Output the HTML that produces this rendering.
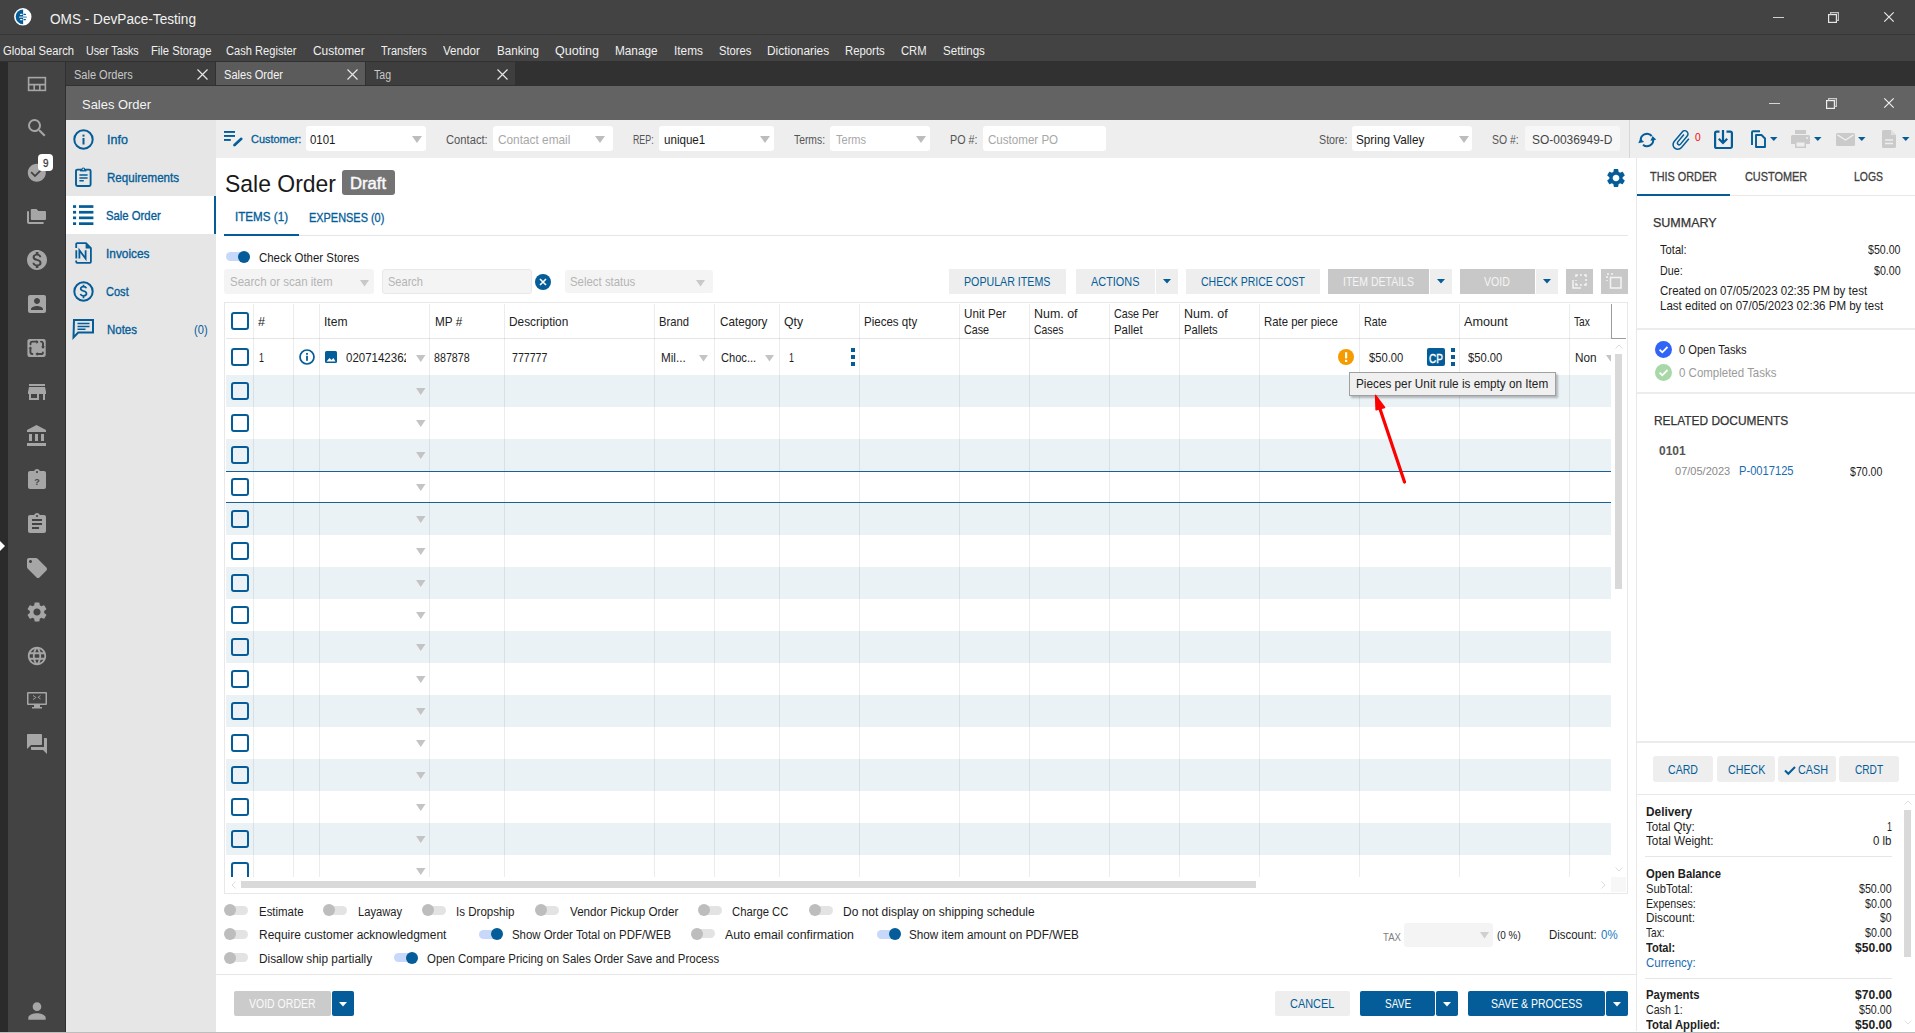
<!DOCTYPE html>
<html><head><meta charset="utf-8"><title>OMS - Sales Order</title><style>
*{margin:0;padding:0;box-sizing:border-box}
html,body{width:1915px;height:1033px;overflow:hidden;background:#fff;font-family:"Liberation Sans",sans-serif}
.a{position:absolute}
.t{position:absolute;white-space:nowrap;line-height:1;transform-origin:0 0}
svg{overflow:visible}
</style></head><body>
<div class="a" style="left:0px;top:0px;width:1915px;height:34px;background:#434343;"></div>
<div class="a" style="left:0px;top:34px;width:1915px;height:1px;background:#363636;"></div>
<div class="a" style="left:0px;top:35px;width:1915px;height:26px;background:#434343;"></div>
<svg class="a" style="left:10px;top:4px;" width="26" height="26" viewBox="0 0 26 26"><circle cx="12.8" cy="12.8" r="8.7" fill="#fff"/><path d="M13.1 5.4A7.4 7.4 0 0 0 13.1 20.2Z" fill="#045d98"/><rect x="10" y="9.8" width="2.6" height="1.3" rx="0.6" fill="#fff"/><rect x="13.4" y="9.8" width="2.6" height="1.3" rx="0.6" fill="#045d98"/><rect x="9" y="12.2" width="8" height="1.9" rx="0.9" fill="#8db4d0"/><rect x="10" y="14.9" width="2.6" height="1.3" rx="0.6" fill="#fff"/><rect x="13.4" y="14.9" width="2.6" height="1.3" rx="0.6" fill="#045d98"/></svg>
<div class="t" style="left:50.00px;top:11.98px;font-size:14.00px;color:#f2f2f2;transform:scaleX(0.9723);">OMS - DevPace-Testing</div>
<div class="a" style="left:1773px;top:16.5px;width:10.5px;height:1.5px;background:#cfcfcf;"></div>
<svg class="a" style="left:1828px;top:12px;" width="11" height="11" viewBox="0 0 11 11"><rect x="0.6" y="2.6" width="7.8" height="7.8" fill="none" stroke="#e6e6e6" stroke-width="1.2"/><path d="M2.6 2.6V0.6h7.8v7.8h-2" fill="none" stroke="#c0c0c0" stroke-width="1.2"/></svg>
<svg class="a" style="left:1883.5px;top:12px;" width="10" height="10" viewBox="0 0 10 10"><path d="M0.3 0.3L9.7 9.7M9.7 0.3L0.3 9.7" stroke="#e8e8e8" stroke-width="1.2"/></svg>
<div class="t" style="left:2.60px;top:45.02px;font-size:12.50px;color:#f0f0f0;transform:scaleX(0.8963);">Global Search</div>
<div class="t" style="left:86.20px;top:45.02px;font-size:12.50px;color:#f0f0f0;transform:scaleX(0.8556);">User Tasks</div>
<div class="t" style="left:151.40px;top:45.02px;font-size:12.50px;color:#f0f0f0;transform:scaleX(0.8991);">File Storage</div>
<div class="t" style="left:226.40px;top:45.02px;font-size:12.50px;color:#f0f0f0;transform:scaleX(0.8901);">Cash Register</div>
<div class="t" style="left:313.30px;top:45.02px;font-size:12.50px;color:#f0f0f0;transform:scaleX(0.9542);">Customer</div>
<div class="t" style="left:381.20px;top:45.02px;font-size:12.50px;color:#f0f0f0;transform:scaleX(0.8734);">Transfers</div>
<div class="t" style="left:443.00px;top:45.02px;font-size:12.50px;color:#f0f0f0;transform:scaleX(0.9313);">Vendor</div>
<div class="t" style="left:496.60px;top:45.02px;font-size:12.50px;color:#f0f0f0;transform:scaleX(0.9275);">Banking</div>
<div class="t" style="left:554.80px;top:45.02px;font-size:12.50px;color:#f0f0f0;transform:scaleX(1.0027);">Quoting</div>
<div class="t" style="left:615.40px;top:45.02px;font-size:12.50px;color:#f0f0f0;transform:scaleX(0.9430);">Manage</div>
<div class="t" style="left:674.00px;top:45.02px;font-size:12.50px;color:#f0f0f0;transform:scaleX(0.9457);">Items</div>
<div class="t" style="left:718.80px;top:45.02px;font-size:12.50px;color:#f0f0f0;transform:scaleX(0.8968);">Stores</div>
<div class="t" style="left:766.80px;top:45.02px;font-size:12.50px;color:#f0f0f0;transform:scaleX(0.9525);">Dictionaries</div>
<div class="t" style="left:845.20px;top:45.02px;font-size:12.50px;color:#f0f0f0;transform:scaleX(0.9070);">Reports</div>
<div class="t" style="left:901.30px;top:45.02px;font-size:12.50px;color:#f0f0f0;transform:scaleX(0.8993);">CRM</div>
<div class="t" style="left:943.00px;top:45.02px;font-size:12.50px;color:#f0f0f0;transform:scaleX(0.9277);">Settings</div>
<div class="a" style="left:0px;top:61px;width:1915px;height:25px;background:#313131;"></div>
<div class="a" style="left:0px;top:62px;width:8px;height:971px;background:#2b2b2b;"></div>
<div class="a" style="left:8px;top:62px;width:58px;height:971px;background:#434343;"></div>
<div class="a" style="left:65px;top:62px;width:1px;height:970px;background:#2f2f2f;"></div>
<div class="a" style="left:66px;top:62px;width:149px;height:23px;background:#3e3e3e;"></div>
<div class="t" style="left:74.00px;top:68.82px;font-size:12.50px;color:#c8c8c8;transform:scaleX(0.8816);">Sale Orders</div>
<svg class="a" style="left:197px;top:69px;" width="11" height="11" viewBox="0 0 11 11"><path d="M0.5 0.5L10.5 10.5M10.5 0.5L0.5 10.5" stroke="#e6e6e6" stroke-width="1.2"/></svg>
<div class="a" style="left:216px;top:62px;width:149px;height:23px;background:#5b5b5b;"></div>
<div class="t" style="left:224.00px;top:68.82px;font-size:12.50px;color:#f4f4f4;transform:scaleX(0.8846);">Sales Order</div>
<svg class="a" style="left:347px;top:69px;" width="11" height="11" viewBox="0 0 11 11"><path d="M0.5 0.5L10.5 10.5M10.5 0.5L0.5 10.5" stroke="#e6e6e6" stroke-width="1.2"/></svg>
<div class="a" style="left:366px;top:62px;width:149px;height:23px;background:#3e3e3e;"></div>
<div class="t" style="left:374.00px;top:68.82px;font-size:12.50px;color:#c8c8c8;transform:scaleX(0.8435);">Tag</div>
<svg class="a" style="left:497px;top:69px;" width="11" height="11" viewBox="0 0 11 11"><path d="M0.5 0.5L10.5 10.5M10.5 0.5L0.5 10.5" stroke="#e6e6e6" stroke-width="1.2"/></svg>
<div class="a" style="left:66px;top:86px;width:1849px;height:34px;background:#636363;"></div>
<div class="t" style="left:82.40px;top:98.26px;font-size:13.50px;color:#f4f4f4;transform:scaleX(0.9579);">Sales Order</div>
<div class="a" style="left:1769px;top:102.5px;width:10.5px;height:1.5px;background:#d6d6d6;"></div>
<svg class="a" style="left:1826px;top:98px;" width="11" height="11" viewBox="0 0 11 11"><rect x="0.6" y="2.6" width="7.8" height="7.8" fill="none" stroke="#eeeeee" stroke-width="1.2"/><path d="M2.6 2.6V0.6h7.8v7.8h-2" fill="none" stroke="#cccccc" stroke-width="1.2"/></svg>
<svg class="a" style="left:1883.5px;top:98px;" width="10" height="10" viewBox="0 0 10 10"><path d="M0.3 0.3L9.7 9.7M9.7 0.3L0.3 9.7" stroke="#f0f0f0" stroke-width="1.2"/></svg>
<svg class="a" style="left:24.5px;top:72.0px;" width="24" height="24" viewBox="0 0 24 24"><g fill="none" stroke="#a6a6a6" stroke-width="1.6"><rect x="3.6" y="5.6" width="16.8" height="12.8"/><path d="M3.6 12.6h16.8M9.2 12.6v5.8M14.8 12.6v5.8"/></g></svg>
<svg class="a" style="left:24.5px;top:116.0px;" width="24" height="24" viewBox="0 0 24 24"><path fill="#a6a6a6" d="M15.5 14h-.79l-.28-.27A6.471 6.471 0 0 0 16 9.5 6.5 6.5 0 1 0 9.5 16c1.610 0 3.09-.59 4.23-1.57l.27.28v.79l5 4.99L20.49 19l-4.99-5zm-6 0C7.01 14 5 11.99 5 9.5S7.01 5 9.5 5 14 7.01 14 9.5 11.99 14 9.5 14z"/></svg>
<svg class="a" style="left:25.7px;top:161.7px;" width="21.6" height="21.6" viewBox="0 0 24 24"><path fill="#a6a6a6" d="M12 2C6.48 2 2 6.48 2 12s4.48 10 10 10 10-4.48 10-10S17.52 2 12 2zm-2 15l-5-5 1.41-1.41L10 14.17l7.59-7.59L19 8l-9 9z"/></svg>
<div class="a" style="left:38px;top:154px;width:15px;height:17px;background:#fff;border-radius:4px"></div>
<div class="t" style="left:42.80px;top:158.13px;font-size:10.50px;color:#3a3a3a;transform:scaleX(0.9418);-webkit-text-stroke:0.3px #3a3a3a;">9</div>
<svg class="a" style="left:24px;top:204px;" width="26" height="26" viewBox="0 0 26 26"><path d="M4 7.2V17.9a1 1 0 0 0 1 1H19.6" fill="none" stroke="#a6a6a6" stroke-width="2"/><path d="M8 4.9h4.5l1.8 2h6.7a1 1 0 0 1 1 1V15a1 1 0 0 1-1 1H7.8a1 1 0 0 1-1-1V6a1.1 1.1 0 0 1 1.2-1.1z" fill="#a6a6a6"/></svg>
<svg class="a" style="left:24.5px;top:248.0px;" width="24" height="24" viewBox="0 0 24 24"><path fill="#a6a6a6" d="M12 2C6.48 2 2 6.48 2 12s4.48 10 10 10 10-4.48 10-10S17.52 2 12 2zm1.41 16.09V20h-2.67v-1.93c-1.71-.36-3.16-1.46-3.27-3.4h1.96c.1 1.05.82 1.87 2.65 1.870 1.96 0 2.4-.98 2.4-1.59 0-.83-.44-1.61-2.67-2.14-2.48-.6-4.18-1.62-4.18-3.67 0-1.72 1.39-2.84 3.11-3.21V4h2.67v1.95c1.86.45 2.79 1.86 2.85 3.39H14.3c-.05-1.11-.64-1.87-2.22-1.87-1.5 0-2.4.68-2.4 1.64 0 .84.65 1.39 2.67 1.91s4.18 1.39 4.18 3.91c-.01 1.83-1.38 2.83-3.12 3.16z"/></svg>
<svg class="a" style="left:24.5px;top:292.0px;" width="24" height="24" viewBox="0 0 24 24"><path fill="#a6a6a6" d="M3 5v14a2 2 0 0 0 2 2h14c1.1 0 2-.9 2-2V5c0-1.1-.9-2-2-2H5a2 2 0 0 0-2 2zm12 4c0 1.66-1.34 3-3 3s-3-1.34-3-3 1.34-3 3-3 3 1.34 3 3zm-9 8c0-2 4-3.1 6-3.1s6 1.1 6 3.1v1H6v-1z"/></svg>
<svg class="a" style="left:24px;top:335px;" width="26" height="26" viewBox="0 0 26 26"><rect x="3.4" y="3.9" width="18.3" height="18" rx="2.2" fill="#a6a6a6"/><g fill="none" stroke="#434343" stroke-width="1.9" stroke-linecap="round"><path d="M6.5 9.2V8.6a2 2 0 0 1 2-2h4.4"/><path d="M17 6.6a2 2 0 0 1 2 2v3.6"/><path d="M8.4 19a2 2 0 0 1-2-2v-3.4"/><path d="M18.9 17.4a1.6 1.6 0 0 1-1.6 1.6h-3.6"/></g><g fill="#434343"><path d="M12.4 4.9L14.6 6.9 12.4 8.9z"/><path d="M17 11.4L19 13.7 21 11.4z"/><path d="M6.4 11.4L4.4 13.6h4z"/><path d="M13.6 17L11.4 19 13.6 21z"/></g></svg>
<svg class="a" style="left:24.5px;top:380.0px;" width="24" height="24" viewBox="0 0 24 24"><path fill="#a6a6a6" d="M20 4H4v2h16V4zm1 10v-2l-1-5H4l-1 5v2h1v6h10v-6h4v6h2v-6h1zm-9 4H6v-4h6v4z"/></svg>
<svg class="a" style="left:24.5px;top:424.0px;" width="24" height="24" viewBox="0 0 24 24"><path fill="#a6a6a6" d="M4 10v7h3v-7H4zm6 0v7h3v-7h-3zM2 22h19v-3H2v3zm14-12v7h3v-7h-3zm-4.5-9L2 6v2h19V6l-9.5-5z"/></svg>
<svg class="a" style="left:24.5px;top:468.0px;" width="24" height="24" viewBox="0 0 24 24"><path fill="#a6a6a6" d="M19 3h-4.18C14.4 1.84 13.3 1 12 1c-1.3 0-2.4.84-2.82 2H5c-1.1 0-2 .9-2 2v14c0 1.1.9 2 2 2h14c1.1 0 2-.9 2-2V5c0-1.1-.9-2-2-2zm-7 0c.55 0 1 .45 1 1s-.45 1-1 1-1-.45-1-1 .45-1 1-1z"/><text x="12" y="17" font-size="9" font-family="Liberation Sans" text-anchor="middle" fill="#434343" font-weight="bold">?</text></svg>
<svg class="a" style="left:24.5px;top:512.0px;" width="24" height="24" viewBox="0 0 24 24"><path fill="#a6a6a6" d="M19 3h-4.18C14.4 1.84 13.3 1 12 1c-1.3 0-2.4.84-2.82 2H5c-1.1 0-2 .9-2 2v14c0 1.1.9 2 2 2h14c1.1 0 2-.9 2-2V5c0-1.1-.9-2-2-2zm-7 0c.55 0 1 .45 1 1s-.45 1-1 1-1-.45-1-1 .45-1 1-1zm2 14H7v-2h7v2zm3-4H7v-2h10v2zm0-4H7V7h10v2z"/></svg>
<svg class="a" style="left:24.5px;top:556.0px;" width="24" height="24" viewBox="0 0 24 24"><path fill="#a6a6a6" d="M21.41 11.58l-9-9C12.05 2.22 11.55 2 11 2H4c-1.1 0-2 .9-2 2v7c0 .55.22 1.05.59 1.42l9 9c.36.36.86.58 1.41.58.55 0 1.05-.22 1.41-.59l7-7c.37-.36.59-.86.59-1.41 0-.55-.23-1.060-.59-1.42zM5.5 7C4.67 7 4 6.33 4 5.5S4.67 4 5.5 4 7 4.67 7 5.5 6.33 7 5.5 7z"/></svg>
<svg class="a" style="left:24.5px;top:600.0px;" width="24" height="24" viewBox="0 0 24 24"><path fill="#a6a6a6" d="M19.14 12.94c.04-.3.06-.61.06-.94 0-.32-.02-.64-.07-.94l2.03-1.58a.49.49 0 0 0 .12-.61l-1.92-3.32a.488.488 0 0 0-.59-.22l-2.39.96c-.5-.38-1.03-.7-1.62-.94l-.36-2.54a.484.484 0 0 0-.48-.41h-3.84c-.24 0-.43.17-.47.41l-.36 2.54c-.59.24-1.13.57-1.62.94l-2.39-.96c-.22-.08-.47 0-.59.22L2.74 8.87c-.12.21-.08.47.12.61l2.03 1.58c-.05.3-.09.63-.09.94s.02.64.07.94l-2.03 1.58a.49.49 0 0 0-.12.61l1.92 3.32c.12.22.37.29.59.22l2.39-.96c.5.38 1.03.7 1.62.94l.36 2.54c.05.24.24.41.48.41h3.84c.24 0 .44-.17.47-.41l.36-2.54c.59-.24 1.13-.56 1.62-.94l2.39.96c.22.08.47 0 .59-.22l1.92-3.32c.12-.22.07-.47-.12-.61l-2.01-1.58zM12 15.6c-1.98 0-3.6-1.62-3.6-3.6s1.62-3.6 3.6-3.6 3.6 1.62 3.6 3.6-1.62 3.6-3.6 3.6z"/></svg>
<svg class="a" style="left:25.5px;top:645.0px;" width="22" height="22" viewBox="0 0 24 24"><path fill="#a6a6a6" d="M11.99 2C6.47 2 2 6.48 2 12s4.47 10 9.99 10C17.52 22 22 17.52 22 12S17.52 2 11.99 2zm6.93 6h-2.95a15.65 15.65 0 0 0-1.38-3.56A8.03 8.03 0 0 1 18.92 8zM12 4.04c.83 1.2 1.48 2.53 1.91 3.96h-3.82c.43-1.43 1.08-2.76 1.910-3.96zM4.26 14C4.1 13.36 4 12.69 4 12s.1-1.36.26-2h3.38c-.08.66-.14 1.32-.14 2 0 .68.06 1.34.14 2H4.26zm.82 2h2.95c.32 1.25.78 2.45 1.38 3.56A7.987 7.987 0 0 1 5.08 16zm2.95-8H5.08a7.987 7.987 0 0 1 4.33-3.56A15.65 15.65 0 0 0 8.03 8zM12 19.96c-.83-1.2-1.48-2.53-1.91-3.96h3.82c-.43 1.43-1.08 2.76-1.91 3.96zM14.34 14H9.66c-.09-.66-.16-1.32-.16-2 0-.68.07-1.35.16-2h4.68c.09.65.16 1.32.16 2 0 .68-.07 1.34-.16 2zm.25 5.56c.6-1.11 1.06-2.31 1.38-3.56h2.95a8.03 8.03 0 0 1-4.33 3.56zM16.36 14c.08-.66.14-1.32.14-2 0-.68-.06-1.34-.14-2h3.38c.16.64.26 1.31.26 2s-.1 1.36-.26 2h-3.38z"/></svg>
<svg class="a" style="left:24.5px;top:688.0px;" width="24" height="24" viewBox="0 0 24 24"><g fill="#a6a6a6"><path d="M3 4h18a1 1 0 0 1 1 1v11a1 1 0 0 1-1 1h-6v2h2v1.5H7V19h2v-2H3a1 1 0 0 1-1-1V5a1 1 0 0 1 1-1zm.5 1.6v9.8h17V5.6z"/><path d="M8 11l2.5-1.5L8 8v-.9l3.5 2.4L8 11.9zM15.5 7l-3 2.2 3 2.2v-.9l-1.9-1.3 1.9-1.3z"/></g></svg>
<svg class="a" style="left:24.5px;top:732.0px;" width="24" height="24" viewBox="0 0 24 24"><path fill="#a6a6a6" d="M21 6h-2v9H6v2c0 .55.45 1 1 1h11l4 4V7c0-.55-.45-1-1-1zm-4 6V3c0-.55-.45-1-1-1H3c-.55 0-1 .45-1 1v14l4-4h10c.55 0 1-.45 1-1z"/></svg>
<svg class="a" style="left:23.5px;top:997.5px;" width="26" height="26" viewBox="0 0 24 24"><path fill="#a6a6a6" d="M12 12c2.21 0 4-1.79 4-4s-1.79-4-4-4-4 1.79-4 4 1.79 4 4 4zm0 2c-2.67 0-8 1.34-8 4v2h16v-2c0-2.66-5.33-4-8-4z"/></svg>
<svg class="a" style="left:0px;top:541px;" width="6" height="10" viewBox="0 0 6 10"><path d="M0 0L5 5L0 10Z" fill="#fff"/></svg>
<div class="a" style="left:66px;top:120px;width:150px;height:913px;background:#e6e6e6;"></div>
<div class="a" style="left:66px;top:196px;width:150px;height:38px;background:#ffffff;"></div>
<div class="a" style="left:214px;top:196px;width:2px;height:38px;background:#045d98;"></div>
<div class="t" style="left:106.70px;top:134.07px;font-size:12.80px;color:#045d98;transform:scaleX(0.9789);-webkit-text-stroke:0.35px #045d98;">Info</div>
<div class="t" style="left:106.70px;top:171.87px;font-size:12.80px;color:#045d98;transform:scaleX(0.9036);-webkit-text-stroke:0.35px #045d98;">Requirements</div>
<div class="t" style="left:106.00px;top:210.17px;font-size:12.80px;color:#045d98;transform:scaleX(0.8837);-webkit-text-stroke:0.35px #045d98;">Sale Order</div>
<div class="t" style="left:106.40px;top:248.07px;font-size:12.80px;color:#045d98;transform:scaleX(0.9264);-webkit-text-stroke:0.35px #045d98;">Invoices</div>
<div class="t" style="left:106.00px;top:286.37px;font-size:12.80px;color:#045d98;transform:scaleX(0.8625);-webkit-text-stroke:0.35px #045d98;">Cost</div>
<div class="t" style="left:106.70px;top:324.17px;font-size:12.80px;color:#045d98;transform:scaleX(0.8942);-webkit-text-stroke:0.35px #045d98;">Notes</div>
<div class="t" style="left:193.60px;top:324.17px;font-size:12.80px;color:#045d98;transform:scaleX(0.8693);">(0)</div>
<svg class="a" style="left:73px;top:129px;" width="21" height="21" viewBox="0 0 21 21"><circle cx="10.5" cy="10.5" r="9.2" fill="none" stroke="#045d98" stroke-width="2"/><rect x="9.5" y="9" width="2" height="6.5" fill="#045d98"/><rect x="9.5" y="5.6" width="2" height="2" fill="#045d98"/></svg>
<svg class="a" style="left:75px;top:167px;" width="17" height="20" viewBox="0 0 17 20"><path d="M5.4 2.6H2.4a1.4 1.4 0 0 0-1.4 1.4v13.6a1.4 1.4 0 0 0 1.4 1.4h11.8a1.4 1.4 0 0 0 1.4-1.4V4a1.4 1.4 0 0 0-1.4-1.4H11.2" fill="none" stroke="#045d98" stroke-width="1.9"/><path d="M5 1.8h6.6v2.6H5z" fill="#045d98"/><circle cx="8.3" cy="2.4" r="1.9" fill="#045d98"/><circle cx="8.3" cy="2.4" r="0.8" fill="#e6e6e6"/><path d="M4.4 8h8.2M4.4 10.9h8.2M4.4 13.8h4.4" stroke="#045d98" stroke-width="1.5"/></svg>
<svg class="a" style="left:73px;top:205px;" width="21" height="21" viewBox="0 0 21 21"><g fill="#045d98"><rect x="0" y="0.2" width="3.1" height="2.7"/><rect x="0" y="5.9" width="3.1" height="2.7"/><rect x="0" y="11.5" width="3.1" height="2.7"/><rect x="0" y="17.3" width="3.1" height="2.7"/><rect x="6" y="0.2" width="14.4" height="2.7"/><rect x="6" y="5.9" width="14.4" height="2.7"/><rect x="6" y="11.5" width="14.4" height="2.7"/><rect x="6" y="17.3" width="14.4" height="2.7"/></g></svg>
<svg class="a" style="left:75px;top:242px;" width="17" height="22" viewBox="0 0 17 22"><path d="M1.2 6V2.2a1 1 0 0 1 1-1H11l4.9 4.9V19.8a1 1 0 0 1-1 1H2.2a1 1 0 0 1-1-1v-1.2" fill="none" stroke="#045d98" stroke-width="1.8"/><path d="M10.6 1.2V6.5H15.9Z" fill="#045d98"/><path d="M1.3 8.3v8.3M4.4 16.6V8.3l6.2 8.3V8.3" fill="none" stroke="#045d98" stroke-width="1.8"/></svg>
<svg class="a" style="left:73px;top:281px;" width="21" height="21" viewBox="0 0 21 21"><circle cx="10.5" cy="10.5" r="9.2" fill="none" stroke="#045d98" stroke-width="2"/><path d="M13.4 7.3c-.4-1.1-1.5-1.7-2.9-1.7-1.7 0-2.8.9-2.8 2.1 0 1.3 1 1.8 2.8 2.3 1.9.5 3 1.1 3 2.6 0 1.3-1.2 2.3-3 2.3-1.5 0-2.7-.7-3.1-1.9M10.5 3.8v2M10.5 15.2v2" fill="none" stroke="#045d98" stroke-width="1.7"/></svg>
<svg class="a" style="left:73px;top:319px;" width="21" height="20" viewBox="0 0 21 20"><path d="M1 1h19v12.5H5.2L0.5 18.5z" fill="none" stroke="#045d98" stroke-width="2" stroke-linejoin="miter"/><path d="M4.5 4.6h12M4.5 7.4h12M4.5 10.2h8" stroke="#045d98" stroke-width="1.5"/></svg>
<div class="a" style="left:216px;top:120px;width:1699px;height:38px;background:#eeeeee;"></div>
<div class="a" style="left:1629px;top:120px;width:1px;height:38px;background:#d6d6d6;"></div>
<svg class="a" style="left:223px;top:130px;" width="20" height="17" viewBox="0 0 20 17"><g fill="#045d98"><rect x="1" y="1" width="11" height="1.9"/><rect x="1" y="5" width="11" height="1.9"/><rect x="1" y="9" width="6.8" height="1.9"/></g><path d="M18.3 8.8L11.6 15" stroke="#045d98" stroke-width="2.6" stroke-linecap="round"/><path d="M10.4 16.2l0.6-2.4 1.8 1.8z" fill="#045d98"/></svg>
<div class="t" style="left:250.70px;top:134.41px;font-size:11.30px;color:#045d98;transform:scaleX(0.9670);-webkit-text-stroke:0.3px #045d98;">Customer:</div>
<div class="a" style="left:306px;top:126px;width:120px;height:25px;background:#fff;border-radius:3px"></div>
<div class="t" style="left:310.00px;top:133.56px;font-size:12.20px;color:#1a1a1a;transform:scaleX(0.9395);">0101</div>
<svg class="a" style="left:412px;top:136px;" width="10" height="7" viewBox="0 0 10 7"><path d="M0 0H10L5.0 7Z" fill="#bdbdbd"/></svg>
<div class="t" style="left:446.30px;top:133.80px;font-size:12.00px;color:#555555;transform:scaleX(0.9331);">Contact:</div>
<div class="a" style="left:493px;top:126px;width:120px;height:25px;background:#fff;border-radius:3px"></div>
<div class="t" style="left:498.00px;top:133.56px;font-size:12.20px;color:#a8a8a8;transform:scaleX(0.9706);">Contact email</div>
<svg class="a" style="left:595px;top:136px;" width="10" height="7" viewBox="0 0 10 7"><path d="M0 0H10L5.0 7Z" fill="#bdbdbd"/></svg>
<div class="t" style="left:633.40px;top:133.80px;font-size:12.00px;color:#555555;transform:scaleX(0.7355);">REP:</div>
<div class="a" style="left:659px;top:126px;width:115px;height:25px;background:#fff;border-radius:3px"></div>
<div class="t" style="left:663.50px;top:133.56px;font-size:12.20px;color:#1a1a1a;transform:scaleX(0.9511);">unique1</div>
<svg class="a" style="left:760px;top:136px;" width="10" height="7" viewBox="0 0 10 7"><path d="M0 0H10L5.0 7Z" fill="#bdbdbd"/></svg>
<div class="t" style="left:794.00px;top:133.80px;font-size:12.00px;color:#555555;transform:scaleX(0.8611);">Terms:</div>
<div class="a" style="left:830px;top:126px;width:100px;height:25px;background:#fff;border-radius:3px"></div>
<div class="t" style="left:835.50px;top:133.56px;font-size:12.20px;color:#a8a8a8;transform:scaleX(0.9033);">Terms</div>
<svg class="a" style="left:916px;top:136px;" width="10" height="7" viewBox="0 0 10 7"><path d="M0 0H10L5.0 7Z" fill="#bdbdbd"/></svg>
<div class="t" style="left:950.00px;top:133.80px;font-size:12.00px;color:#555555;transform:scaleX(0.8931);">PO #:</div>
<div class="a" style="left:983px;top:126px;width:123px;height:25px;background:#fff;border-radius:3px"></div>
<div class="t" style="left:987.70px;top:133.56px;font-size:12.20px;color:#a8a8a8;transform:scaleX(0.9499);">Customer PO</div>
<div class="t" style="left:1318.50px;top:133.80px;font-size:12.00px;color:#555555;transform:scaleX(0.8902);">Store:</div>
<div class="a" style="left:1352px;top:126px;width:120px;height:25px;background:#fff;border-radius:3px"></div>
<div class="t" style="left:1356.00px;top:133.56px;font-size:12.20px;color:#1a1a1a;transform:scaleX(0.9636);">Spring Valley</div>
<svg class="a" style="left:1458.6px;top:136px;" width="10" height="7" viewBox="0 0 10 7"><path d="M0 0H10L5.0 7Z" fill="#bdbdbd"/></svg>
<div class="t" style="left:1492.40px;top:133.80px;font-size:12.00px;color:#555555;transform:scaleX(0.8670);">SO #:</div>
<div class="a" style="left:1525px;top:126px;width:95px;height:25px;background:#f7f7f7;border-radius:3px"></div>
<div class="t" style="left:1532.30px;top:133.56px;font-size:12.20px;color:#444;transform:scaleX(0.9810);">SO-0036949-D</div>
<div class="t" style="left:224.90px;top:171.71px;font-size:24.50px;color:#1a1a1a;transform:scaleX(0.9369);">Sale Order</div>
<div class="a" style="left:342px;top:170px;width:53px;height:25px;background:#737373;border-radius:3px"></div>
<div class="t" style="left:350.40px;top:174.63px;font-size:16.20px;color:#fafafa;transform:scaleX(1.0283);-webkit-text-stroke:0.45px #fafafa;">Draft</div>
<div class="t" style="left:234.80px;top:211.26px;font-size:12.20px;color:#045d98;transform:scaleX(0.9554);-webkit-text-stroke:0.3px #045d98;">ITEMS (1)</div>
<div class="t" style="left:309.00px;top:212.36px;font-size:12.20px;color:#045d98;transform:scaleX(0.8968);-webkit-text-stroke:0.3px #045d98;">EXPENSES (0)</div>
<div class="a" style="left:224px;top:235px;width:1404px;height:1px;background:#e6e6e6;"></div>
<div class="a" style="left:224px;top:234px;width:75px;height:2px;background:#045d98;"></div>
<svg class="a" style="left:1604px;top:166.3px;" width="24" height="24" viewBox="0 0 24 24"><path fill="#045d98" d="M19.14 12.94c.04-.3.06-.61.06-.94 0-.32-.02-.64-.07-.94l2.03-1.58a.49.49 0 0 0 .12-.61l-1.92-3.32a.488.488 0 0 0-.59-.22l-2.39.96c-.5-.38-1.03-.7-1.62-.94l-.36-2.540a.484.484 0 0 0-.48-.41h-3.84c-.24 0-.43.17-.47.41l-.36 2.54c-.59.24-1.13.57-1.62.94l-2.39-.96c-.22-.08-.47 0-.59.22L2.74 8.87c-.12.21-.08.47.12.61l2.03 1.58c-.05.3-.09.63-.09.94s.02.64.07.94l-2.03 1.58a.49.49 0 0 0-.12.61l1.92 3.32c.12.22.37.29.59.22l2.39-.96c.5.38 1.03.7 1.62.94l.36 2.54c.05.24.24.41.48.41h3.84c.24 0 .44-.17.47-.41l.36-2.54c.59-.24 1.13-.56 1.62-.94l2.39.96c.22.08.47 0 .59-.22l1.92-3.32c.12-.22.07-.47-.12-.61l-2.01-1.580zM12 15.6c-1.98 0-3.6-1.62-3.6-3.6s1.62-3.6 3.6-3.6 3.6 1.62 3.6 3.6-1.62 3.6-3.6 3.6z" transform="translate(12 12) scale(0.93) translate(-12 -12)"/></svg>
<div class="a" style="left:226px;top:252px;width:22px;height:9px;background:#c8d8fa;border-radius:5px"></div>
<div class="a" style="left:238px;top:250.5px;width:12px;height:12px;background:#045d98;border-radius:50%"></div>
<div class="t" style="left:258.50px;top:251.56px;font-size:12.20px;color:#1a1a1a;transform:scaleX(0.9372);">Check Other Stores</div>
<div class="a" style="left:224px;top:269px;width:150px;height:25px;background:#f4f4f4;border-radius:3px"></div>
<div class="t" style="left:230.30px;top:276.46px;font-size:12.20px;color:#b4b4b4;transform:scaleX(0.9466);">Search or scan item</div>
<svg class="a" style="left:360px;top:280px;" width="9" height="6.5" viewBox="0 0 9 6.5"><path d="M0 0H9L4.5 6.5Z" fill="#c8c8c8"/></svg>
<div class="a" style="left:382px;top:269px;width:150px;height:25px;background:#f4f4f4;border:1px solid #e8e8e8;border-radius:3px"></div>
<div class="t" style="left:388.20px;top:276.46px;font-size:12.20px;color:#b4b4b4;transform:scaleX(0.9054);">Search</div>
<svg class="a" style="left:535px;top:273.6px;" width="16" height="16" viewBox="0 0 16 16"><circle cx="8" cy="8" r="8" fill="#045d98"/><path d="M5 5L11 11M11 5L5 11" stroke="#fff" stroke-width="1.6"/></svg>
<div class="a" style="left:565px;top:270px;width:148px;height:23px;background:#f4f4f4;border-radius:3px"></div>
<div class="t" style="left:570.20px;top:276.46px;font-size:12.20px;color:#b4b4b4;transform:scaleX(0.9363);">Select status</div>
<svg class="a" style="left:696px;top:280px;" width="9" height="6.5" viewBox="0 0 9 6.5"><path d="M0 0H9L4.5 6.5Z" fill="#c8c8c8"/></svg>
<div class="a" style="left:949px;top:269px;width:117px;height:25px;background:#eeeeee;"></div>
<div class="t" style="left:964.40px;top:275.96px;font-size:12.20px;color:#045d98;transform:scaleX(0.8739);">POPULAR ITEMS</div>
<div class="a" style="left:1076px;top:269px;width:79px;height:25px;background:#eeeeee;"></div>
<div class="t" style="left:1091.30px;top:275.96px;font-size:12.20px;color:#045d98;transform:scaleX(0.8944);">ACTIONS</div>
<div class="a" style="left:1156px;top:269px;width:22px;height:25px;background:#eeeeee;"></div>
<svg class="a" style="left:1163.0px;top:279.35px;" width="8" height="4.5" viewBox="0 0 8 4.5"><path d="M0 0H8L4.0 4.5Z" fill="#045d98"/></svg>
<div class="a" style="left:1186px;top:269px;width:134px;height:25px;background:#eeeeee;"></div>
<div class="t" style="left:1201.30px;top:275.96px;font-size:12.20px;color:#045d98;transform:scaleX(0.8627);">CHECK PRICE COST</div>
<div class="a" style="left:1328px;top:269px;width:101px;height:25px;background:#c8c8c8;"></div>
<div class="t" style="left:1343.00px;top:275.96px;font-size:12.20px;color:#f4f4f4;transform:scaleX(0.8608);">ITEM DETAILS</div>
<div class="a" style="left:1430px;top:269px;width:22px;height:25px;background:#eeeeee;"></div>
<svg class="a" style="left:1437.0px;top:279.35px;" width="8" height="4.5" viewBox="0 0 8 4.5"><path d="M0 0H8L4.0 4.5Z" fill="#045d98"/></svg>
<div class="a" style="left:1460px;top:269px;width:75px;height:25px;background:#c8c8c8;"></div>
<div class="t" style="left:1484.40px;top:275.96px;font-size:12.20px;color:#f4f4f4;transform:scaleX(0.8683);">VOID</div>
<div class="a" style="left:1536px;top:269px;width:22px;height:25px;background:#eeeeee;"></div>
<svg class="a" style="left:1543.0px;top:279.35px;" width="8" height="4.5" viewBox="0 0 8 4.5"><path d="M0 0H8L4.0 4.5Z" fill="#045d98"/></svg>
<div class="a" style="left:1566px;top:269px;width:27px;height:25px;background:#c8c8c8;"></div>
<svg class="a" style="left:1569px;top:271px;" width="20" height="20" viewBox="0 0 20 20"><g fill="none" stroke="#f2f2f2" stroke-width="1.6"><path d="M4 9v8h8"/><path d="M7 6V4h2M11 4h2M15 4h2v2M17 8v2M17 12v2h-2M13 14h-2M9 14h-2v-2M7 10v-1" stroke-dasharray="none"/></g></svg>
<div class="a" style="left:1601px;top:269px;width:27px;height:25px;background:#c8c8c8;"></div>
<svg class="a" style="left:1604px;top:271px;" width="20" height="20" viewBox="0 0 20 20"><g fill="none" stroke="#f2f2f2" stroke-width="1.6"><rect x="6.5" y="6.5" width="10.5" height="10.5"/><path d="M3 3h2M7 3h2M3 5v2M3 9v1"/></g></svg>
<div class="a" style="left:224px;top:302px;width:1404px;height:592px;border:1px solid #e8e8e8"></div>
<div class="a" style="left:226px;top:375px;width:1385px;height:32px;background:#ebf2f6;"></div>
<div class="a" style="left:226px;top:439px;width:1385px;height:32px;background:#ebf2f6;"></div>
<div class="a" style="left:226px;top:503px;width:1385px;height:32px;background:#ebf2f6;"></div>
<div class="a" style="left:226px;top:567px;width:1385px;height:32px;background:#ebf2f6;"></div>
<div class="a" style="left:226px;top:631px;width:1385px;height:32px;background:#ebf2f6;"></div>
<div class="a" style="left:226px;top:695px;width:1385px;height:32px;background:#ebf2f6;"></div>
<div class="a" style="left:226px;top:759px;width:1385px;height:32px;background:#ebf2f6;"></div>
<div class="a" style="left:226px;top:823px;width:1385px;height:32px;background:#ebf2f6;"></div>
<div class="a" style="left:226px;top:338px;width:1385px;height:1px;background:#e6e6e6;"></div>
<div class="a" style="left:253px;top:304px;width:1px;height:573px;background:rgba(0,0,0,0.075);"></div>
<div class="a" style="left:293px;top:304px;width:1px;height:573px;background:rgba(0,0,0,0.075);"></div>
<div class="a" style="left:319px;top:304px;width:1px;height:573px;background:rgba(0,0,0,0.075);"></div>
<div class="a" style="left:429px;top:304px;width:1px;height:573px;background:rgba(0,0,0,0.075);"></div>
<div class="a" style="left:504px;top:304px;width:1px;height:573px;background:rgba(0,0,0,0.075);"></div>
<div class="a" style="left:654px;top:304px;width:1px;height:573px;background:rgba(0,0,0,0.075);"></div>
<div class="a" style="left:714px;top:304px;width:1px;height:573px;background:rgba(0,0,0,0.075);"></div>
<div class="a" style="left:779px;top:304px;width:1px;height:573px;background:rgba(0,0,0,0.075);"></div>
<div class="a" style="left:859px;top:304px;width:1px;height:573px;background:rgba(0,0,0,0.075);"></div>
<div class="a" style="left:959px;top:304px;width:1px;height:573px;background:rgba(0,0,0,0.075);"></div>
<div class="a" style="left:1029px;top:304px;width:1px;height:573px;background:rgba(0,0,0,0.075);"></div>
<div class="a" style="left:1109px;top:304px;width:1px;height:573px;background:rgba(0,0,0,0.075);"></div>
<div class="a" style="left:1179px;top:304px;width:1px;height:573px;background:rgba(0,0,0,0.075);"></div>
<div class="a" style="left:1259px;top:304px;width:1px;height:573px;background:rgba(0,0,0,0.075);"></div>
<div class="a" style="left:1359px;top:304px;width:1px;height:573px;background:rgba(0,0,0,0.075);"></div>
<div class="a" style="left:1459px;top:304px;width:1px;height:573px;background:rgba(0,0,0,0.075);"></div>
<div class="a" style="left:1569px;top:304px;width:1px;height:573px;background:rgba(0,0,0,0.075);"></div>
<div class="a" style="left:226px;top:471px;width:1385px;height:1.4px;background:#1a5f95;"></div>
<div class="a" style="left:226px;top:502px;width:1385px;height:1.4px;background:#1a5f95;"></div>
<div class="a" style="left:1611px;top:304px;width:1px;height:35px;background:#9c9c9c;"></div>
<div class="a" style="left:1611px;top:338px;width:15px;height:1px;background:#9c9c9c;"></div>
<div class="t" style="left:258.00px;top:316.23px;font-size:12.40px;color:#222;transform:scaleX(1.0150);">#</div>
<div class="t" style="left:323.90px;top:316.23px;font-size:12.40px;color:#222;transform:scaleX(0.9745);">Item</div>
<div class="t" style="left:434.70px;top:316.23px;font-size:12.40px;color:#222;transform:scaleX(0.9471);">MP #</div>
<div class="t" style="left:509.30px;top:316.23px;font-size:12.40px;color:#222;transform:scaleX(0.9560);">Description</div>
<div class="t" style="left:659.40px;top:316.23px;font-size:12.40px;color:#222;transform:scaleX(0.9066);">Brand</div>
<div class="t" style="left:719.60px;top:316.23px;font-size:12.40px;color:#222;transform:scaleX(0.9440);">Category</div>
<div class="t" style="left:784.00px;top:316.23px;font-size:12.40px;color:#222;transform:scaleX(0.9902);">Qty</div>
<div class="t" style="left:864.00px;top:316.23px;font-size:12.40px;color:#222;transform:scaleX(0.9300);">Pieces qty</div>
<div class="t" style="left:1264.10px;top:316.23px;font-size:12.40px;color:#222;transform:scaleX(0.9163);">Rate per piece</div>
<div class="t" style="left:1364.20px;top:316.23px;font-size:12.40px;color:#222;transform:scaleX(0.8705);">Rate</div>
<div class="t" style="left:1464.20px;top:316.23px;font-size:12.40px;color:#222;transform:scaleX(1.0226);">Amount</div>
<div class="t" style="left:1574.10px;top:316.23px;font-size:12.40px;color:#222;transform:scaleX(0.8240);">Tax</div>
<div class="t" style="left:964.20px;top:308.43px;font-size:12.40px;color:#222;transform:scaleX(0.9399);">Unit Per</div>
<div class="t" style="left:964.20px;top:323.53px;font-size:12.40px;color:#222;transform:scaleX(0.8671);">Case</div>
<div class="t" style="left:1034.20px;top:308.43px;font-size:12.40px;color:#222;transform:scaleX(1.0043);">Num. of</div>
<div class="t" style="left:1034.20px;top:323.53px;font-size:12.40px;color:#222;transform:scaleX(0.8393);">Cases</div>
<div class="t" style="left:1114.40px;top:308.43px;font-size:12.40px;color:#222;transform:scaleX(0.8628);">Case Per</div>
<div class="t" style="left:1114.40px;top:323.53px;font-size:12.40px;color:#222;transform:scaleX(0.9220);">Pallet</div>
<div class="t" style="left:1184.30px;top:308.43px;font-size:12.40px;color:#222;transform:scaleX(1.0066);">Num. of</div>
<div class="t" style="left:1184.30px;top:323.53px;font-size:12.40px;color:#222;transform:scaleX(0.9054);">Pallets</div>
<div class="a" style="left:231px;top:312px;width:17.5px;height:17.5px;border:2.2px solid #045d98;border-radius:3px"></div>
<div class="a" style="left:231px;top:348px;width:17.5px;height:17.5px;border:2.2px solid #045d98;border-radius:3px"></div>
<div class="a" style="left:231px;top:382px;width:17.5px;height:17.5px;border:2.2px solid #045d98;border-radius:3px"></div>
<div class="a" style="left:231px;top:414px;width:17.5px;height:17.5px;border:2.2px solid #045d98;border-radius:3px"></div>
<div class="a" style="left:231px;top:446px;width:17.5px;height:17.5px;border:2.2px solid #045d98;border-radius:3px"></div>
<div class="a" style="left:231px;top:478px;width:17.5px;height:17.5px;border:2.2px solid #045d98;border-radius:3px"></div>
<div class="a" style="left:231px;top:510px;width:17.5px;height:17.5px;border:2.2px solid #045d98;border-radius:3px"></div>
<div class="a" style="left:231px;top:542px;width:17.5px;height:17.5px;border:2.2px solid #045d98;border-radius:3px"></div>
<div class="a" style="left:231px;top:574px;width:17.5px;height:17.5px;border:2.2px solid #045d98;border-radius:3px"></div>
<div class="a" style="left:231px;top:606px;width:17.5px;height:17.5px;border:2.2px solid #045d98;border-radius:3px"></div>
<div class="a" style="left:231px;top:638px;width:17.5px;height:17.5px;border:2.2px solid #045d98;border-radius:3px"></div>
<div class="a" style="left:231px;top:670px;width:17.5px;height:17.5px;border:2.2px solid #045d98;border-radius:3px"></div>
<div class="a" style="left:231px;top:702px;width:17.5px;height:17.5px;border:2.2px solid #045d98;border-radius:3px"></div>
<div class="a" style="left:231px;top:734px;width:17.5px;height:17.5px;border:2.2px solid #045d98;border-radius:3px"></div>
<div class="a" style="left:231px;top:766px;width:17.5px;height:17.5px;border:2.2px solid #045d98;border-radius:3px"></div>
<div class="a" style="left:231px;top:798px;width:17.5px;height:17.5px;border:2.2px solid #045d98;border-radius:3px"></div>
<div class="a" style="left:231px;top:830px;width:17.5px;height:17.5px;border:2.2px solid #045d98;border-radius:3px"></div>
<div class="a" style="left:0;top:0;width:1915px;height:877px;overflow:hidden;pointer-events:none"><div class="a" style="left:231px;top:862px;width:17.5px;height:17.5px;border:2.2px solid #045d98;border-radius:3px"></div></div>
<svg class="a" style="left:415.5px;top:354.8px;" width="9.5" height="7" viewBox="0 0 9.5 7"><path d="M0 0H9.5L4.75 7Z" fill="#c4c4c4"/></svg>
<svg class="a" style="left:415.5px;top:387.7px;" width="9.5" height="7" viewBox="0 0 9.5 7"><path d="M0 0H9.5L4.75 7Z" fill="#c4c4c4"/></svg>
<svg class="a" style="left:415.5px;top:419.7px;" width="9.5" height="7" viewBox="0 0 9.5 7"><path d="M0 0H9.5L4.75 7Z" fill="#c4c4c4"/></svg>
<svg class="a" style="left:415.5px;top:451.7px;" width="9.5" height="7" viewBox="0 0 9.5 7"><path d="M0 0H9.5L4.75 7Z" fill="#c4c4c4"/></svg>
<svg class="a" style="left:415.5px;top:483.7px;" width="9.5" height="7" viewBox="0 0 9.5 7"><path d="M0 0H9.5L4.75 7Z" fill="#c4c4c4"/></svg>
<svg class="a" style="left:415.5px;top:515.7px;" width="9.5" height="7" viewBox="0 0 9.5 7"><path d="M0 0H9.5L4.75 7Z" fill="#c4c4c4"/></svg>
<svg class="a" style="left:415.5px;top:547.7px;" width="9.5" height="7" viewBox="0 0 9.5 7"><path d="M0 0H9.5L4.75 7Z" fill="#c4c4c4"/></svg>
<svg class="a" style="left:415.5px;top:579.7px;" width="9.5" height="7" viewBox="0 0 9.5 7"><path d="M0 0H9.5L4.75 7Z" fill="#c4c4c4"/></svg>
<svg class="a" style="left:415.5px;top:611.7px;" width="9.5" height="7" viewBox="0 0 9.5 7"><path d="M0 0H9.5L4.75 7Z" fill="#c4c4c4"/></svg>
<svg class="a" style="left:415.5px;top:643.7px;" width="9.5" height="7" viewBox="0 0 9.5 7"><path d="M0 0H9.5L4.75 7Z" fill="#c4c4c4"/></svg>
<svg class="a" style="left:415.5px;top:675.7px;" width="9.5" height="7" viewBox="0 0 9.5 7"><path d="M0 0H9.5L4.75 7Z" fill="#c4c4c4"/></svg>
<svg class="a" style="left:415.5px;top:707.7px;" width="9.5" height="7" viewBox="0 0 9.5 7"><path d="M0 0H9.5L4.75 7Z" fill="#c4c4c4"/></svg>
<svg class="a" style="left:415.5px;top:739.7px;" width="9.5" height="7" viewBox="0 0 9.5 7"><path d="M0 0H9.5L4.75 7Z" fill="#c4c4c4"/></svg>
<svg class="a" style="left:415.5px;top:771.7px;" width="9.5" height="7" viewBox="0 0 9.5 7"><path d="M0 0H9.5L4.75 7Z" fill="#c4c4c4"/></svg>
<svg class="a" style="left:415.5px;top:803.7px;" width="9.5" height="7" viewBox="0 0 9.5 7"><path d="M0 0H9.5L4.75 7Z" fill="#c4c4c4"/></svg>
<svg class="a" style="left:415.5px;top:835.7px;" width="9.5" height="7" viewBox="0 0 9.5 7"><path d="M0 0H9.5L4.75 7Z" fill="#c4c4c4"/></svg>
<svg class="a" style="left:415.5px;top:867.7px;" width="9.5" height="7" viewBox="0 0 9.5 7"><path d="M0 0H9.5L4.75 7Z" fill="#c4c4c4"/></svg>
<div class="t" style="left:258.60px;top:352.03px;font-size:12.40px;color:#1e1e1e;transform:scaleX(0.7250);">1</div>
<svg class="a" style="left:299px;top:349px;" width="16" height="16" viewBox="0 0 16 16"><circle cx="8" cy="8" r="7" fill="none" stroke="#045d98" stroke-width="1.7"/><rect x="7.1" y="6.8" width="1.8" height="5" fill="#045d98"/><rect x="7.1" y="4" width="1.8" height="1.8" fill="#045d98"/></svg>
<svg class="a" style="left:325px;top:351px;" width="12" height="12" viewBox="0 0 12 12"><rect x="0" y="0" width="12" height="12" rx="1.5" fill="#045d98"/><path d="M1.5 10.5L4.5 7L6.5 9L8.5 7L10.5 10.5Z" fill="#fff"/></svg>
<div class="a" style="left:346px;top:340px;width:60px;height:30px;overflow:hidden"><div class="t" style="left:0.00px;top:12.03px;font-size:12.40px;color:#1e1e1e;transform:scaleX(0.9280);">0207142362</div></div>
<div class="t" style="left:434.30px;top:352.23px;font-size:12.40px;color:#1e1e1e;transform:scaleX(0.8628);">887878</div>
<div class="t" style="left:512.40px;top:352.23px;font-size:12.40px;color:#1e1e1e;transform:scaleX(0.8531);">777777</div>
<div class="t" style="left:661.30px;top:352.23px;font-size:12.40px;color:#1e1e1e;transform:scaleX(0.9437);">Mil...</div>
<svg class="a" style="left:699px;top:354.8px;" width="9" height="6.5" viewBox="0 0 9 6.5"><path d="M0 0H9L4.5 6.5Z" fill="#c4c4c4"/></svg>
<div class="t" style="left:720.90px;top:352.23px;font-size:12.40px;color:#1e1e1e;transform:scaleX(0.8961);">Choc...</div>
<svg class="a" style="left:764.5px;top:354.8px;" width="9" height="6.5" viewBox="0 0 9 6.5"><path d="M0 0H9L4.5 6.5Z" fill="#c4c4c4"/></svg>
<div class="t" style="left:788.80px;top:352.23px;font-size:12.40px;color:#1e1e1e;transform:scaleX(0.7250);">1</div>
<svg class="a" style="left:851px;top:348px;" width="4" height="18" viewBox="0 0 4 18"><rect x="0" y="0" width="4" height="4" fill="#045d98"/><rect x="0" y="7" width="4" height="4" fill="#045d98"/><rect x="0" y="14" width="4" height="4" fill="#045d98"/></svg>
<svg class="a" style="left:1338px;top:349px;" width="16" height="16" viewBox="0 0 16 16"><circle cx="8" cy="8" r="8" fill="#f59b00"/><rect x="7" y="3.2" width="2.2" height="6.2" fill="#fff"/><rect x="7" y="10.8" width="2.2" height="2.2" fill="#fff"/></svg>
<div class="t" style="left:1368.60px;top:351.53px;font-size:12.40px;color:#1e1e1e;transform:scaleX(0.9044);">$50.00</div>
<div class="a" style="left:1427px;top:348px;width:18px;height:18px;background:#045d98;border-radius:2px"></div>
<div class="t" style="left:1428.90px;top:351.84px;font-size:13.00px;color:#fff;transform:scaleX(0.7752);-webkit-text-stroke:0.4px #fff;">CP</div>
<svg class="a" style="left:1451px;top:348px;" width="4" height="18" viewBox="0 0 4 18"><rect x="0" y="0" width="4" height="4" fill="#045d98"/><rect x="0" y="7" width="4" height="4" fill="#045d98"/><rect x="0" y="14" width="4" height="4" fill="#045d98"/></svg>
<div class="t" style="left:1468.30px;top:351.53px;font-size:12.40px;color:#1e1e1e;transform:scaleX(0.9044);">$50.00</div>
<div class="a" style="left:1570px;top:340px;width:41px;height:30px;overflow:hidden"><div class="t" style="left:4.70px;top:12.23px;font-size:12.40px;color:#1e1e1e;transform:scaleX(0.9495);">Non</div><svg class="a" style="left:35.5px;top:14.8px;" width="9" height="6.5" viewBox="0 0 9 6.5"><path d="M0 0H9L4.5 6.5Z" fill="#c4c4c4"/></svg></div>
<svg class="a" style="left:1614.5px;top:344px;" width="8" height="5" viewBox="0 0 8 5"><path d="M0.5 4.5L4 1L7.5 4.5" fill="none" stroke="#dcdcdc" stroke-width="1"/></svg>
<div class="a" style="left:1615px;top:354px;width:7px;height:235px;background:#d9d9d9;"></div>
<svg class="a" style="left:1614.5px;top:867px;" width="8" height="5" viewBox="0 0 8 5"><path d="M0.5 0.5L4 4L7.5 0.5" fill="none" stroke="#dcdcdc" stroke-width="1"/></svg>
<svg class="a" style="left:231px;top:881px;" width="5" height="8" viewBox="0 0 5 8"><path d="M4.5 0.5L1 4L4.5 7.5" fill="none" stroke="#dcdcdc" stroke-width="1"/></svg>
<div class="a" style="left:241px;top:881px;width:1015px;height:7px;background:#d9d9d9;"></div>
<svg class="a" style="left:1601px;top:881px;" width="5" height="8" viewBox="0 0 5 8"><path d="M0.5 0.5L4 4L0.5 7.5" fill="none" stroke="#dcdcdc" stroke-width="1"/></svg>
<div class="a" style="left:1611px;top:877px;width:15px;height:15px;background:#f7f7f7;"></div>
<div class="a" style="left:1349px;top:372px;width:207px;height:24px;background:#f0f0f0;border:1px solid #a0a0a0;box-shadow:2px 2px 2px rgba(0,0,0,0.25)"></div>
<div class="t" style="left:1356.30px;top:378.36px;font-size:12.20px;color:#222;transform:scaleX(0.9651);">Pieces per Unit rule is empty on Item</div>
<svg class="a" style="left:1360px;top:390px;" width="60" height="100" viewBox="0 0 60 100"><line x1="44.5" y1="92" x2="19" y2="16" stroke="#ff0000" stroke-width="3.2" stroke-linecap="round"/><path d="M15.6 5.4L16.1 19.8L24.6 17.5Z" fill="#ff0000" stroke="#ff0000" stroke-width="1.5" stroke-linejoin="round"/></svg>
<div class="a" style="left:226.0px;top:905.9px;width:22px;height:9px;background:#e3e3e3;border-radius:5px"></div><div class="a" style="left:224.0px;top:904.4px;width:12px;height:12px;background:#bdbdbd;border-radius:50%"></div>
<div class="t" style="left:258.60px;top:905.55px;font-size:12.30px;color:#1e1e1e;transform:scaleX(0.9300);">Estimate</div>
<div class="a" style="left:324.8px;top:905.9px;width:22px;height:9px;background:#e3e3e3;border-radius:5px"></div><div class="a" style="left:322.8px;top:904.4px;width:12px;height:12px;background:#bdbdbd;border-radius:50%"></div>
<div class="t" style="left:357.60px;top:905.55px;font-size:12.30px;color:#1e1e1e;transform:scaleX(0.9084);">Layaway</div>
<div class="a" style="left:423.8px;top:905.9px;width:22px;height:9px;background:#e3e3e3;border-radius:5px"></div><div class="a" style="left:421.8px;top:904.4px;width:12px;height:12px;background:#bdbdbd;border-radius:50%"></div>
<div class="t" style="left:456.20px;top:905.75px;font-size:12.30px;color:#1e1e1e;transform:scaleX(0.9404);">Is Dropship</div>
<div class="a" style="left:537.1px;top:905.9px;width:22px;height:9px;background:#e3e3e3;border-radius:5px"></div><div class="a" style="left:535.1px;top:904.4px;width:12px;height:12px;background:#bdbdbd;border-radius:50%"></div>
<div class="t" style="left:569.50px;top:905.75px;font-size:12.30px;color:#1e1e1e;transform:scaleX(0.9485);">Vendor Pickup Order</div>
<div class="a" style="left:700.0px;top:905.9px;width:22px;height:9px;background:#e3e3e3;border-radius:5px"></div><div class="a" style="left:698.0px;top:904.4px;width:12px;height:12px;background:#bdbdbd;border-radius:50%"></div>
<div class="t" style="left:732.20px;top:905.75px;font-size:12.30px;color:#1e1e1e;transform:scaleX(0.9167);">Charge CC</div>
<div class="a" style="left:810.9px;top:905.9px;width:22px;height:9px;background:#e3e3e3;border-radius:5px"></div><div class="a" style="left:808.9px;top:904.4px;width:12px;height:12px;background:#bdbdbd;border-radius:50%"></div>
<div class="t" style="left:843.20px;top:905.75px;font-size:12.30px;color:#1e1e1e;transform:scaleX(0.9734);">Do not display on shipping schedule</div>
<div class="a" style="left:226.0px;top:929.5px;width:22px;height:9px;background:#e3e3e3;border-radius:5px"></div><div class="a" style="left:224.0px;top:928.0px;width:12px;height:12px;background:#bdbdbd;border-radius:50%"></div>
<div class="t" style="left:258.60px;top:929.35px;font-size:12.30px;color:#1e1e1e;transform:scaleX(0.9720);">Require customer acknowledgment</div>
<div class="a" style="left:478.8px;top:929.5px;width:22px;height:9px;background:#c8d8fa;border-radius:5px"></div><div class="a" style="left:490.8px;top:928.0px;width:12px;height:12px;background:#045d98;border-radius:50%"></div>
<div class="t" style="left:511.50px;top:929.15px;font-size:12.30px;color:#1e1e1e;transform:scaleX(0.9285);">Show Order Total on PDF/WEB</div>
<div class="a" style="left:693.0px;top:929.1px;width:22px;height:9px;background:#e3e3e3;border-radius:5px"></div><div class="a" style="left:691.0px;top:927.6px;width:12px;height:12px;background:#bdbdbd;border-radius:50%"></div>
<div class="t" style="left:725.40px;top:928.65px;font-size:12.30px;color:#1e1e1e;transform:scaleX(1.0029);">Auto email confirmation</div>
<div class="a" style="left:876.9px;top:929.5px;width:22px;height:9px;background:#c8d8fa;border-radius:5px"></div><div class="a" style="left:888.9px;top:928.0px;width:12px;height:12px;background:#045d98;border-radius:50%"></div>
<div class="t" style="left:909.20px;top:929.15px;font-size:12.30px;color:#1e1e1e;transform:scaleX(0.9522);">Show item amount on PDF/WEB</div>
<div class="a" style="left:226.0px;top:953.0px;width:22px;height:9px;background:#e3e3e3;border-radius:5px"></div><div class="a" style="left:224.0px;top:951.5px;width:12px;height:12px;background:#bdbdbd;border-radius:50%"></div>
<div class="t" style="left:258.60px;top:952.95px;font-size:12.30px;color:#1e1e1e;transform:scaleX(0.9627);">Disallow ship partially</div>
<div class="a" style="left:394.1px;top:953.0px;width:22px;height:9px;background:#c8d8fa;border-radius:5px"></div><div class="a" style="left:406.1px;top:951.5px;width:12px;height:12px;background:#045d98;border-radius:50%"></div>
<div class="t" style="left:426.50px;top:952.65px;font-size:12.30px;color:#1e1e1e;transform:scaleX(0.9291);">Open Compare Pricing on Sales Order Save and Process</div>
<div class="t" style="left:1382.70px;top:931.59px;font-size:10.80px;color:#808080;transform:scaleX(0.8860);">TAX</div>
<div class="a" style="left:1404px;top:923px;width:89px;height:24px;background:#f4f4f4;border-radius:3px"></div>
<svg class="a" style="left:1480px;top:932px;" width="9" height="6.5" viewBox="0 0 9 6.5"><path d="M0 0H9L4.5 6.5Z" fill="#cfcfcf"/></svg>
<div class="t" style="left:1497.20px;top:929.77px;font-size:11.50px;color:#1e1e1e;transform:scaleX(0.8662);">(0 %)</div>
<div class="t" style="left:1548.90px;top:929.35px;font-size:12.30px;color:#1e1e1e;transform:scaleX(0.9284);">Discount:</div>
<div class="t" style="left:1601.00px;top:929.35px;font-size:12.30px;color:#1a78c2;transform:scaleX(0.9338);">0%</div>
<div class="a" style="left:216px;top:974px;width:1420px;height:1px;background:#e6e6e6;"></div>
<div class="a" style="left:234px;top:991px;width:97px;height:25px;background:#cbcbcb;border-radius:2px"></div>
<div class="t" style="left:249.20px;top:998.35px;font-size:12.30px;color:#fafafa;transform:scaleX(0.8548);">VOID ORDER</div>
<div class="a" style="left:332px;top:991px;width:22px;height:25px;background:#045d98;border-radius:2px"></div>
<svg class="a" style="left:339.0px;top:1001.75px;" width="8" height="4.5" viewBox="0 0 8 4.5"><path d="M0 0H8L4.0 4.5Z" fill="#fff"/></svg>
<div class="a" style="left:1275px;top:991px;width:75px;height:25px;background:#eeeeee;border-radius:2px"></div>
<div class="t" style="left:1290.20px;top:998.35px;font-size:12.30px;color:#045d98;transform:scaleX(0.8898);">CANCEL</div>
<div class="a" style="left:1360px;top:991px;width:75px;height:25px;background:#045d98;border-radius:2px"></div>
<div class="t" style="left:1384.90px;top:998.35px;font-size:12.30px;color:#fff;transform:scaleX(0.8181);">SAVE</div>
<div class="a" style="left:1436px;top:991px;width:22px;height:25px;background:#045d98;border-radius:2px"></div>
<svg class="a" style="left:1443.0px;top:1001.75px;" width="8" height="4.5" viewBox="0 0 8 4.5"><path d="M0 0H8L4.0 4.5Z" fill="#fff"/></svg>
<div class="a" style="left:1468px;top:991px;width:137px;height:25px;background:#045d98;border-radius:2px"></div>
<div class="t" style="left:1490.90px;top:998.35px;font-size:12.30px;color:#fff;transform:scaleX(0.8516);">SAVE &amp; PROCESS</div>
<div class="a" style="left:1606px;top:991px;width:22px;height:25px;background:#045d98;border-radius:2px"></div>
<svg class="a" style="left:1613.0px;top:1001.75px;" width="8" height="4.5" viewBox="0 0 8 4.5"><path d="M0 0H8L4.0 4.5Z" fill="#fff"/></svg>
<div class="a" style="left:0px;top:1032px;width:1915px;height:1px;background:#bdbdbd;"></div>
<div class="a" style="left:1636px;top:158px;width:1px;height:873px;background:#e8e8e8;"></div>
<svg class="a" style="left:1635px;top:127.5px;" width="24" height="24" viewBox="0 0 24 24"><path d="M16.75 8.01A6.2 6.2 0 0 0 5.94 13.29 M8.01 16.75A6.2 6.2 0 0 0 18.11 10.92" fill="none" stroke="#045d98" stroke-width="2"/><path d="M5.34 10.47L3.27 15.16L9.14 13.92Z M17.61 8.09L21.28 11.66L15.37 12.70Z" fill="#045d98"/></svg>
<svg class="a" style="left:1669px;top:127.5px;" width="24" height="24" viewBox="0 0 24 24"><path fill="#045d98" d="M16.5 6v11.5c0 2.21-1.79 4-4 4s-4-1.79-4-4V5a2.5 2.5 0 0 1 5 0v10.5c0 .55-.45 1-1 1s-1-.45-1-1V6H10v9.5a2.5 2.5 0 0 0 5 0V5c0-2.21-1.79-4-4-4S7 2.79 7 5v12.5c0 3.04 2.46 5.5 5.5 5.5s5.5-2.46 5.5-5.5V6h-1.5z" transform="rotate(40 12 12)"/></svg>
<div class="t" style="left:1695.20px;top:132.22px;font-size:11.20px;color:#ff0000;transform:scaleX(0.9151);">0</div>
<svg class="a" style="left:1713px;top:129px;" width="20" height="20" viewBox="0 0 20 20"><path d="M6.5 2.6H3.6a1.5 1.5 0 0 0-1.5 1.5V17.5a1.5 1.5 0 0 0 1.5 1.5H17.4a1.5 1.5 0 0 0 1.5-1.5V4.1a1.5 1.5 0 0 0-1.5-1.5H13.5" fill="none" stroke="#045d98" stroke-width="2.2"/><path d="M10 1v12.5M5.8 9.8L10 14l4.2-4.2" fill="none" stroke="#045d98" stroke-width="2.2"/></svg>
<svg class="a" style="left:1748px;top:130px;" width="18" height="18" viewBox="0 0 18 18"><path d="M4 15V2.2a1 1 0 0 1 1-1h7" fill="none" stroke="#045d98" stroke-width="1.9"/><path d="M8 5h5.5L17 8.5V17H8z" fill="none" stroke="#045d98" stroke-width="1.9" stroke-linejoin="round"/></svg>
<svg class="a" style="left:1770.25px;top:136.5px;" width="7.5" height="4" viewBox="0 0 7.5 4"><path d="M0 0H7.5L3.75 4Z" fill="#045d98"/></svg>
<svg class="a" style="left:1791px;top:130px;" width="19" height="18" viewBox="0 0 19 18"><path fill="#cacaca" d="M4 0h11v4H4zM1.5 5h16A1.5 1.5 0 0 1 19 6.5V14h-4v4H4v-4H0V6.5A1.5 1.5 0 0 1 1.5 5zM5.5 12.5v4h8v-4z"/><circle cx="16" cy="8" r="1" fill="#eee"/></svg>
<svg class="a" style="left:1813.75px;top:136.5px;" width="7.5" height="4" viewBox="0 0 7.5 4"><path d="M0 0H7.5L3.75 4Z" fill="#045d98"/></svg>
<svg class="a" style="left:1835.5px;top:133px;" width="19" height="13" viewBox="0 0 19 13"><path fill="#cacaca" d="M1.5 0h16A1.5 1.5 0 0 1 19 1.5V11.5A1.5 1.5 0 0 1 17.5 13H1.5A1.5 1.5 0 0 1 0 11.5V1.5A1.5 1.5 0 0 1 1.5 0z"/><path d="M1.5 1.8L9.5 7 17.5 1.8" fill="none" stroke="#eee" stroke-width="1.4"/></svg>
<svg class="a" style="left:1857.75px;top:136.5px;" width="7.5" height="4" viewBox="0 0 7.5 4"><path d="M0 0H7.5L3.75 4Z" fill="#045d98"/></svg>
<svg class="a" style="left:1882px;top:130px;" width="14" height="18" viewBox="0 0 14 18"><path fill="#cacaca" d="M1.5 0H9l5 5v11.5A1.5 1.5 0 0 1 12.5 18h-11A1.5 1.5 0 0 1 0 16.5V1.5A1.5 1.5 0 0 1 1.5 0z"/><path d="M3 10h8M3 13.5h8" stroke="#eee" stroke-width="1.3"/><path d="M9 0v5h5" fill="#e0e0e0"/></svg>
<svg class="a" style="left:1901.75px;top:136.5px;" width="7.5" height="4" viewBox="0 0 7.5 4"><path d="M0 0H7.5L3.75 4Z" fill="#045d98"/></svg>
<div class="t" style="left:1650.00px;top:171.00px;font-size:12.60px;color:#404040;transform:scaleX(0.8622);-webkit-text-stroke:0.3px #404040;">THIS ORDER</div>
<div class="t" style="left:1744.80px;top:171.00px;font-size:12.60px;color:#404040;transform:scaleX(0.8654);-webkit-text-stroke:0.3px #404040;">CUSTOMER</div>
<div class="t" style="left:1854.00px;top:171.00px;font-size:12.60px;color:#404040;transform:scaleX(0.8283);-webkit-text-stroke:0.3px #404040;">LOGS</div>
<div class="a" style="left:1637px;top:195px;width:278px;height:1px;background:#e8e8e8;"></div>
<div class="a" style="left:1637px;top:194px;width:93px;height:2px;background:#045d98;"></div>
<div class="t" style="left:1653.20px;top:216.14px;font-size:13.00px;color:#333;transform:scaleX(0.9620);-webkit-text-stroke:0.25px #333;">SUMMARY</div>
<div class="t" style="left:1659.60px;top:244.26px;font-size:12.20px;color:#1e1e1e;transform:scaleX(0.9156);">Total:</div>
<div class="t" style="left:1868.40px;top:244.26px;font-size:12.20px;color:#1e1e1e;transform:scaleX(0.8709);">$50.00</div>
<div class="t" style="left:1659.60px;top:264.66px;font-size:12.20px;color:#1e1e1e;transform:scaleX(0.8808);">Due:</div>
<div class="t" style="left:1874.20px;top:264.66px;font-size:12.20px;color:#1e1e1e;transform:scaleX(0.8745);">$0.00</div>
<div class="t" style="left:1659.60px;top:285.06px;font-size:12.20px;color:#1e1e1e;transform:scaleX(0.9433);">Created on 07/05/2023 02:35 PM by test</div>
<div class="t" style="left:1659.60px;top:299.56px;font-size:12.20px;color:#1e1e1e;transform:scaleX(0.9465);">Last edited on 07/05/2023 02:36 PM by test</div>
<div class="a" style="left:1637px;top:328px;width:278px;height:2px;background:#ececec;"></div>
<svg class="a" style="left:1655px;top:341.3px;" width="17" height="17" viewBox="0 0 17 17"><circle cx="8.5" cy="8.5" r="8.5" fill="#2f64f6"/><path d="M4.6 8.6L7.3 11.3L12.5 6" fill="none" stroke="#fff" stroke-width="1.8"/></svg>
<div class="t" style="left:1679.10px;top:344.26px;font-size:12.20px;color:#1e1e1e;transform:scaleX(0.9103);">0 Open Tasks</div>
<svg class="a" style="left:1655px;top:364.1px;" width="17" height="17" viewBox="0 0 17 17"><circle cx="8.5" cy="8.5" r="8.5" fill="#a8d8a8"/><path d="M4.6 8.6L7.3 11.3L12.5 6" fill="none" stroke="#fff" stroke-width="1.8"/></svg>
<div class="t" style="left:1679.10px;top:367.06px;font-size:12.20px;color:#9a9a9a;transform:scaleX(0.9427);">0 Completed Tasks</div>
<div class="a" style="left:1637px;top:392px;width:278px;height:2px;background:#ececec;"></div>
<div class="t" style="left:1653.50px;top:414.14px;font-size:13.00px;color:#333;transform:scaleX(0.9174);-webkit-text-stroke:0.25px #333;">RELATED DOCUMENTS</div>
<div class="t" style="left:1659.20px;top:445.26px;font-size:12.20px;color:#555;font-weight:bold;transform:scaleX(0.9837);">0101</div>
<div class="t" style="left:1675.00px;top:466.35px;font-size:11.00px;color:#8a8a8a;transform:scaleX(1.0026);">07/05/2023</div>
<div class="t" style="left:1738.60px;top:465.06px;font-size:12.20px;color:#1a6cb0;transform:scaleX(0.9146);">P-0017125</div>
<div class="t" style="left:1849.50px;top:465.56px;font-size:12.20px;color:#1e1e1e;transform:scaleX(0.8683);">$70.00</div>
<div class="a" style="left:1637px;top:741px;width:278px;height:2px;background:#ececec;"></div>
<div class="a" style="left:1653px;top:756px;width:60px;height:26px;background:#eeeeee;border-radius:3px"></div>
<div class="t" style="left:1667.60px;top:764.16px;font-size:12.20px;color:#045d98;transform:scaleX(0.8678);">CARD</div>
<div class="a" style="left:1717px;top:756px;width:58px;height:26px;background:#eeeeee;border-radius:3px"></div>
<div class="t" style="left:1727.50px;top:764.16px;font-size:12.20px;color:#045d98;transform:scaleX(0.8757);">CHECK</div>
<div class="a" style="left:1778px;top:756px;width:58px;height:26px;background:#eeeeee;border-radius:3px"></div>
<div class="t" style="left:1798.40px;top:764.16px;font-size:12.20px;color:#045d98;transform:scaleX(0.8909);">CASH</div>
<div class="a" style="left:1839px;top:756px;width:60px;height:26px;background:#eeeeee;border-radius:3px"></div>
<div class="t" style="left:1855.30px;top:764.16px;font-size:12.20px;color:#045d98;transform:scaleX(0.8293);">CRDT</div>
<svg class="a" style="left:1783.5px;top:766px;" width="12" height="9" viewBox="0 0 12 9"><path d="M1 4.5L4.3 7.8L11 1" fill="none" stroke="#045d98" stroke-width="2"/></svg>
<div class="a" style="left:1637px;top:794px;width:278px;height:1px;background:#e8e8e8;"></div>
<div class="t" style="left:1645.50px;top:805.76px;font-size:12.20px;color:#1e1e1e;font-weight:bold;transform:scaleX(0.9731);">Delivery</div>
<div class="t" style="left:1645.50px;top:820.66px;font-size:12.20px;color:#1e1e1e;transform:scaleX(0.9471);">Total Qty:</div>
<div class="t" style="left:1886.50px;top:820.66px;font-size:12.20px;color:#1e1e1e;transform:scaleX(0.7369);">1</div>
<div class="t" style="left:1645.50px;top:835.26px;font-size:12.20px;color:#1e1e1e;transform:scaleX(0.9630);">Total Weight:</div>
<div class="t" style="left:1873.00px;top:835.26px;font-size:12.20px;color:#1e1e1e;transform:scaleX(0.9405);">0 lb</div>
<div class="a" style="left:1645px;top:856px;width:247px;height:1px;background:#e6e6e6;"></div>
<div class="t" style="left:1645.50px;top:867.96px;font-size:12.20px;color:#1e1e1e;font-weight:bold;transform:scaleX(0.9218);">Open Balance</div>
<div class="t" style="left:1645.50px;top:882.76px;font-size:12.20px;color:#1e1e1e;transform:scaleX(0.9200);">SubTotal:</div>
<div class="t" style="left:1858.90px;top:882.76px;font-size:12.20px;color:#1e1e1e;transform:scaleX(0.8736);">$50.00</div>
<div class="t" style="left:1645.50px;top:897.56px;font-size:12.20px;color:#1e1e1e;transform:scaleX(0.8724);">Expenses:</div>
<div class="t" style="left:1864.70px;top:897.56px;font-size:12.20px;color:#1e1e1e;transform:scaleX(0.8778);">$0.00</div>
<div class="t" style="left:1645.50px;top:912.36px;font-size:12.20px;color:#1e1e1e;transform:scaleX(0.9635);">Discount:</div>
<div class="t" style="left:1880.00px;top:912.36px;font-size:12.20px;color:#1e1e1e;transform:scaleX(0.8474);">$0</div>
<div class="t" style="left:1645.50px;top:927.16px;font-size:12.20px;color:#1e1e1e;transform:scaleX(0.8313);">Tax:</div>
<div class="t" style="left:1864.70px;top:927.16px;font-size:12.20px;color:#1e1e1e;transform:scaleX(0.8778);">$0.00</div>
<div class="t" style="left:1645.50px;top:941.96px;font-size:12.20px;color:#1e1e1e;font-weight:bold;transform:scaleX(0.9071);">Total:</div>
<div class="t" style="left:1854.50px;top:941.96px;font-size:12.20px;color:#1e1e1e;font-weight:bold;transform:scaleX(0.9915);">$50.00</div>
<div class="t" style="left:1645.50px;top:957.26px;font-size:12.20px;color:#1a6cb0;transform:scaleX(0.9398);">Currency:</div>
<div class="a" style="left:1645px;top:978px;width:247px;height:1px;background:#e6e6e6;"></div>
<div class="t" style="left:1645.50px;top:988.96px;font-size:12.20px;color:#1e1e1e;font-weight:bold;transform:scaleX(0.9281);">Payments</div>
<div class="t" style="left:1854.50px;top:988.96px;font-size:12.20px;color:#1e1e1e;font-weight:bold;transform:scaleX(0.9915);">$70.00</div>
<div class="t" style="left:1645.50px;top:1004.16px;font-size:12.20px;color:#1e1e1e;transform:scaleX(0.8729);">Cash 1:</div>
<div class="t" style="left:1858.90px;top:1004.16px;font-size:12.20px;color:#1e1e1e;transform:scaleX(0.8736);">$50.00</div>
<div class="t" style="left:1645.50px;top:1019.06px;font-size:12.20px;color:#1e1e1e;font-weight:bold;transform:scaleX(0.9279);">Total Applied:</div>
<div class="t" style="left:1854.50px;top:1019.06px;font-size:12.20px;color:#1e1e1e;font-weight:bold;transform:scaleX(0.9915);">$50.00</div>
<svg class="a" style="left:1903.5px;top:799.5px;" width="8" height="5" viewBox="0 0 8 5"><path d="M0.5 4.5L4 1L7.5 4.5" fill="none" stroke="#e0e0e0" stroke-width="1"/></svg>
<div class="a" style="left:1904px;top:810px;width:7px;height:147px;background:#d9d9d9;"></div>
<svg class="a" style="left:1903.5px;top:1020px;" width="8" height="5" viewBox="0 0 8 5"><path d="M0.5 0.5L4 4L7.5 0.5" fill="none" stroke="#e0e0e0" stroke-width="1"/></svg>
</body></html>
